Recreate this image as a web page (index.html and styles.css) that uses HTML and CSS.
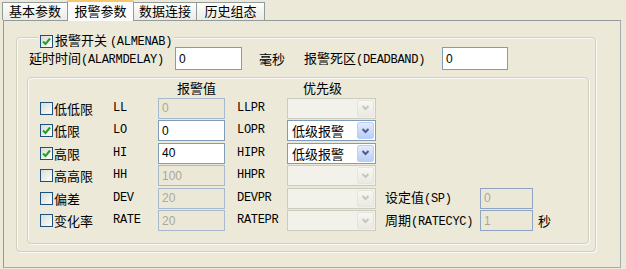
FILE: index.html
```html
<!DOCTYPE html>
<html lang="zh-CN">
<head>
<meta charset="UTF-8">
<title>报警参数</title>
<link rel="stylesheet" href="styles.css">
</head>
<body>
<div class="tabs">
  <div class="tab t1">基本参数</div>
  <div class="tab t2 active">报警参数</div>
  <div class="tab t3">数据连接</div>
  <div class="tab t4">历史组态</div>
</div>

<div class="panel">
<div class="group outer">
  <div class="legend">
    <span class="check on"><svg viewBox="0 0 11 11"><polyline points="2,5.5 4.5,8 9,2.5"/></svg></span>
    <span>报警开关 <span class="en">(ALMENAB)</span></span>
  </div>

  <div class="delay-row">
    <span class="lbl-delay">延时时间<span class="en">(ALARMDELAY)</span></span>
    <input type="text" class="box w67" value="0">
    <span class="unit-ms">毫秒</span>
    <span class="lbl-dead">报警死区<span class="en">(DEADBAND)</span></span>
    <input type="text" class="box w66" value="0">
  </div>

  <div class="group inner">
    <div class="grid">
      <div class="head c3">报警值</div>
      <div class="head c5">优先级</div>

      <label class="chk"><span class="check"></span>低低限</label>
      <span class="code">LL</span>
      <input type="text" class="box" value="0" disabled>
      <span class="code pr">LLPR</span>
      <div class="combo off"><span class="combo-text"></span><span class="combo-btn"><svg viewBox="0 0 9 6"><polyline points="1.5,1 4.5,4 7.5,1"/></svg></span></div>

      <label class="chk"><span class="check on"><svg viewBox="0 0 11 11"><polyline points="2,5.5 4.5,8 9,2.5"/></svg></span>低限</label>
      <span class="code">LO</span>
      <input type="text" class="box" value="0">
      <span class="code pr">LOPR</span>
      <div class="combo"><span class="combo-text">低级报警</span><span class="combo-btn"><svg viewBox="0 0 9 6"><polyline points="1.5,1 4.5,4 7.5,1"/></svg></span></div>

      <label class="chk"><span class="check on"><svg viewBox="0 0 11 11"><polyline points="2,5.5 4.5,8 9,2.5"/></svg></span>高限</label>
      <span class="code">HI</span>
      <input type="text" class="box" value="40">
      <span class="code pr">HIPR</span>
      <div class="combo"><span class="combo-text">低级报警</span><span class="combo-btn"><svg viewBox="0 0 9 6"><polyline points="1.5,1 4.5,4 7.5,1"/></svg></span></div>

      <label class="chk"><span class="check"></span>高高限</label>
      <span class="code">HH</span>
      <input type="text" class="box" value="100" disabled>
      <span class="code pr">HHPR</span>
      <div class="combo off"><span class="combo-text"></span><span class="combo-btn"><svg viewBox="0 0 9 6"><polyline points="1.5,1 4.5,4 7.5,1"/></svg></span></div>

      <label class="chk"><span class="check"></span>偏差</label>
      <span class="code">DEV</span>
      <input type="text" class="box" value="20" disabled>
      <span class="code pr">DEVPR</span>
      <div class="combo off"><span class="combo-text"></span><span class="combo-btn"><svg viewBox="0 0 9 6"><polyline points="1.5,1 4.5,4 7.5,1"/></svg></span></div>
      <span class="extra">设定值<span class="en">(SP)</span></span>
      <input type="text" class="box sm" value="0" disabled>

      <label class="chk"><span class="check"></span>变化率</label>
      <span class="code">RATE</span>
      <input type="text" class="box" value="20" disabled>
      <span class="code pr">RATEPR</span>
      <div class="combo off"><span class="combo-text"></span><span class="combo-btn"><svg viewBox="0 0 9 6"><polyline points="1.5,1 4.5,4 7.5,1"/></svg></span></div>
      <span class="extra">周期<span class="en">(RATECYC)</span></span>
      <input type="text" class="box sm" value="1" disabled>
      <span class="unit-s">秒</span>
    </div>
  </div>
</div>
</div>
</body>
</html>
```

FILE: styles.css
```css
body{margin:0;width:626px;height:269px;overflow:hidden;background:#ece9d8;color:#000;font-family:"Noto Sans CJK SC",sans-serif;font-size:13px;line-height:15px;}
.en,.code{font-family:"Liberation Mono","Noto Sans CJK SC",monospace;font-size:12px;letter-spacing:-0.3px;}

/* tab strip */
.tabs{display:flex;align-items:flex-end;height:20px;padding-left:2px;}
.tab{box-sizing:border-box;height:18px;line-height:16px;text-align:center;border:1px solid #919b9c;border-bottom:none;background:linear-gradient(#fdfdfb,#ecebe4);margin-left:-1px;}
.t1{width:66px;margin-left:0;}
.t2{width:67px;}
.t3{width:64px;}
.t4{width:69px;}
.tab.active{position:relative;z-index:1;height:21px;margin-bottom:-1px;line-height:18px;background:#fcfcfe;border-top:2px solid #f3c96a;border-radius:2px 2px 0 0;}

/* page */
.panel{box-sizing:border-box;margin-left:3px;width:618px;height:248px;border:1px solid #919b9c;border-right-color:#a7abb0;border-bottom-color:#a7abb0;background:#ece9d8;padding:16px 0 0 12px;}
.group{box-sizing:border-box;border:1px solid #d0d0bf;border-radius:4px;box-shadow:inset 1px 1px 0 #fbfaf6,1px 1px 0 #fbfaf6;}
.outer{position:relative;width:580px;height:215px;padding:9px 0 0 12px;}
.legend{position:absolute;left:21px;top:-6px;display:flex;align-items:center;gap:2px;padding:0 2px;background:#ece9d8;}

.check{box-sizing:border-box;display:inline-block;width:13px;height:13px;border:1px solid #1c5180;background:linear-gradient(135deg,#dcdcd4,#fdfdfb);vertical-align:middle;}
.check svg{display:block;width:11px;height:11px;fill:none;stroke:#21a121;stroke-width:2;}

/* delay line */
.delay-row{display:flex;align-items:center;height:23px;}
.lbl-delay{width:146px;}
.unit-ms{width:45px;margin-left:17px;}
.lbl-dead{width:138px;}

.box{box-sizing:border-box;height:21px;width:67px;margin:0;padding:0 3px;border:1px solid #7f9db9;background:#fff;color:#000;font-family:"Liberation Sans",sans-serif;font-size:12px;outline:none;}
.delay-row .box{height:23px;}
.w66{width:66px;}
.box:disabled{background:#ebe8d8;color:#aca899;border-color:#a9b9cc;}
.box.sm{width:53px;border-color:#8ea4c0;}

/* limits */
.inner{width:562px;height:167px;margin:7px 0 0 -2px;padding-left:12px;}
.grid{display:grid;grid-template-columns:73px 45px 67px 62px 89px 104px 53px 1fr;grid-template-rows:19px repeat(6,22.5px);align-items:center;}
.head.c3{grid-column:3;padding-left:19px;}
.head.c5{grid-column:5;padding-left:16px;}
.chk{grid-column:1;display:flex;align-items:center;gap:1px;}
.pr{padding-left:12px;}
.extra{grid-column:6;padding-left:9px;}
.unit-s{padding-left:5px;}

.combo{box-sizing:border-box;display:flex;height:21px;width:89px;border:1px solid #7f9db9;background:#fff;}
.combo-text{flex:1;padding-left:4px;line-height:19px;}
.combo-btn{box-sizing:border-box;width:17px;margin:1px;display:flex;align-items:center;justify-content:center;border:1px solid #bcd0f6;border-radius:2px;background:linear-gradient(#e3ecfe,#b9cdf6);}
.combo-btn svg{width:9px;height:6px;fill:none;stroke:#4d6185;stroke-width:2;}
.combo.off{border-color:#cdcbbe;background:#f3f2ea;}
.combo.off .combo-btn{border-color:#e6e5dd;background:linear-gradient(#f7f7f3,#eae9e2);}
.combo.off .combo-btn svg{stroke:#c9c7ba;}
```
